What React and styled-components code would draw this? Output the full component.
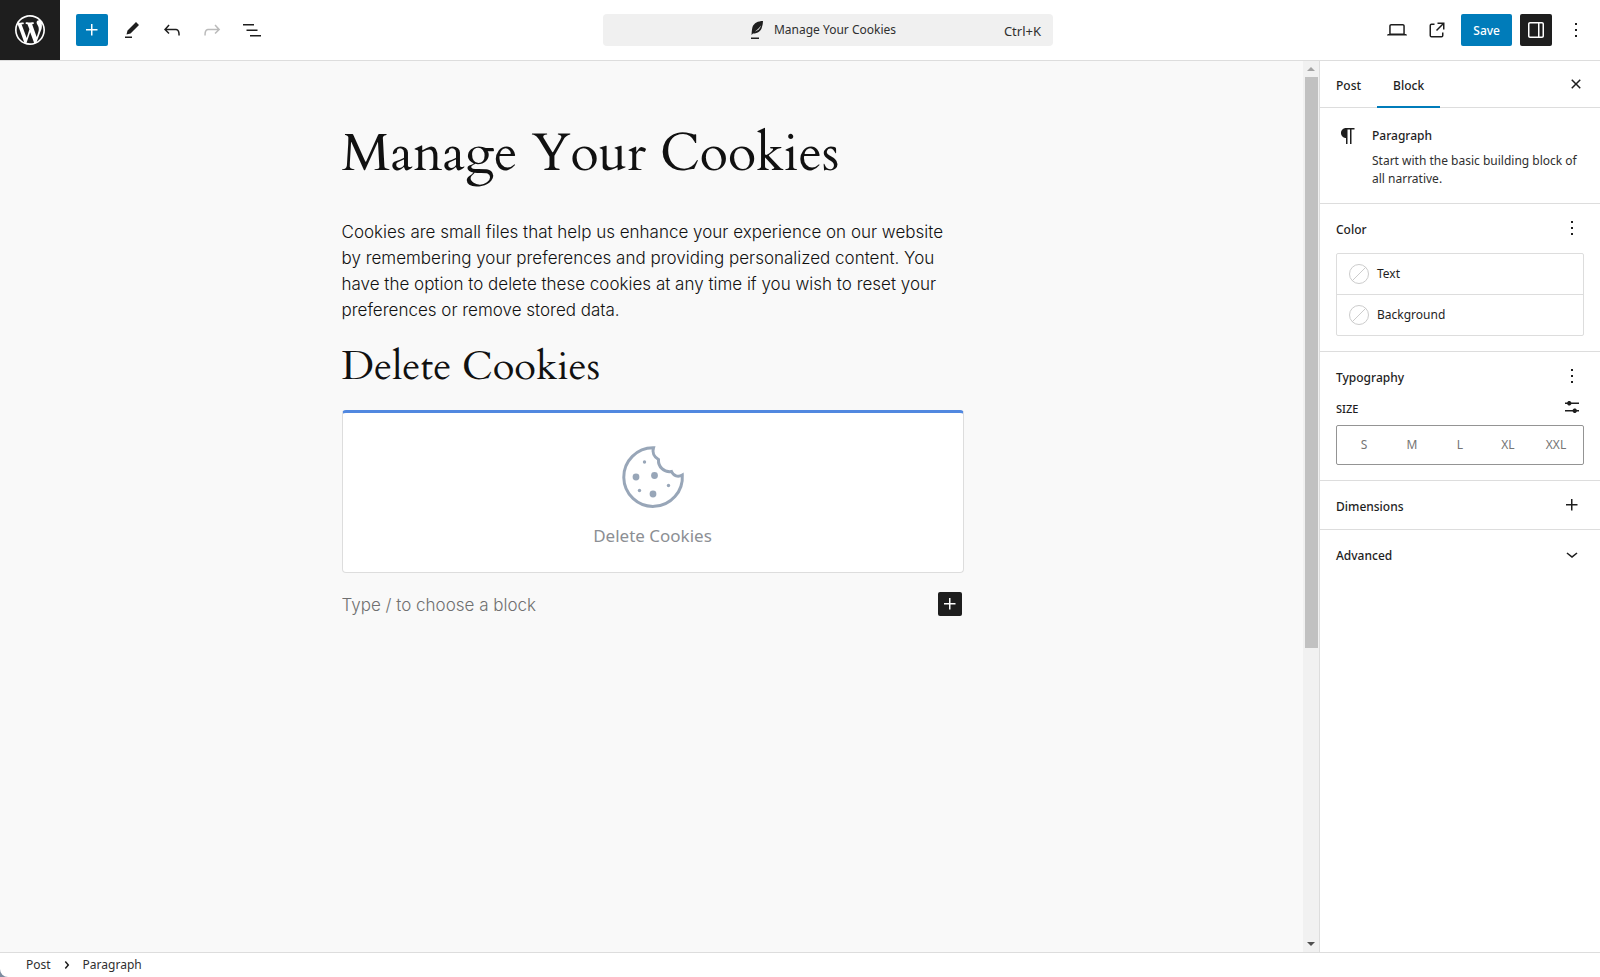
import React, { useState } from 'react'
import styled, { createGlobalStyle, css } from 'styled-components'

const icons = {
    plus: 'M11 12.5V17.5H12.5V12.5H17.5V11H12.5V6H11V11H6V12.5H11Z',
    edit: 'm19 7-3-3-8.5 8.5-1 4 4-1L19 7Zm-7 11.5H5V20h7v-1.5Z',
    undo: 'M18.3 11.7c-.6-.6-1.4-.9-2.3-.9H6.7l2.9-3.3-1.1-1-4.5 5L8.5 16l1-1-2.7-2.7H16c.5 0 .9.2 1.3.5 1 1 1 3.4 1 4.5v.3h1.5v-.2c0-1.5 0-4.3-1.5-5.7z',
    redo: 'M15.6 6.5l-1.1 1 2.9 3.3H8c-.9 0-1.7.3-2.3.9-1.4 1.5-1.4 4.2-1.4 5.6v.2h1.5v-.3c0-1.1 0-3.5 1-4.5.3-.3.7-.5 1.3-.5h9.2L14.5 15l1.1 1.1 4.6-4.6-4.6-5z',
    list: 'M3 6h11v1.5H3V6Zm3.5 5.5h11V13h-11v-1.5ZM21 17H10v1.5h11V17Z',
    laptop: 'M20.5 16h-.7V8c0-1.1-.9-2-2-2H6.2c-1.1 0-2 .9-2 2v8h-.7c-.8 0-1.5.7-1.5 1.5h20c0-.8-.7-1.5-1.5-1.5zM5.7 8c0-.3.2-.5.5-.5h11.6c.3 0 .5.2.5.5v7.6H5.7V8z',
    external: 'M19.5 4.5h-7V6h4.44l-5.97 5.97 1.06 1.06L18 7.06v4.44h1.5v-7Zm-13 1a2 2 0 0 0-2 2v10a2 2 0 0 0 2 2h10a2 2 0 0 0 2-2v-3H17v3a.5.5 0 0 1-.5.5h-10a.5.5 0 0 1-.5-.5v-10a.5.5 0 0 1 .5-.5h3V5.5h-3Z',
    drawer: 'M18 4H6c-1.1 0-2 .9-2 2v12c0 1.1.9 2 2 2h12c1.1 0 2-.9 2-2V6c0-1.1-.9-2-2-2zm-4 14.5H6c-.3 0-.5-.2-.5-.5V6c0-.3.2-.5.5-.5h8v13zm4.5-.5c0 .3-.2.5-.5.5h-2.5v-13H18c.3 0 .5.2.5.5v12z',
    more: 'M13 19h-2v-2h2v2zm0-6h-2v-2h2v2zm0-6h-2V5h2v2z',
    close: 'M12 13.06l3.712 3.713 1.061-1.06L13.061 12l3.712-3.712-1.06-1.06L12 10.938 8.288 7.227l-1.061 1.06L10.939 12l-3.712 3.712 1.06 1.061L12 13.061z',
    paragraph: 'm9.996 14v-.225l.004 0v6.225h1.5v-14.5h2.5v14.5h1.5v-14.5h3v-1.5h-8.504c-2.761 0-5 2.239-5 5 0 2.761 2.239 5 5 5z',
    sliders: 'm19 7.5h-7.628c-.309-.874-1.142-1.5-2.122-1.5-.98 0-1.813.626-2.122 1.5h-2.128v1.5h2.128c.309.874 1.142 1.5 2.122 1.5.98 0 1.813-.626 2.122-1.5h7.628zM19 15h-2.128c-.309-.874-1.142-1.5-2.122-1.5s-1.813.626-2.122 1.5h-7.628v1.5h7.628c.309.874 1.142 1.5 2.122 1.5s1.813-.626 2.122-1.5h2.128z',
    chevronDown: 'M17.5 11.6L12 16l-5.5-4.4.9-1.2L12 14l4.5-3.6 1 1.2z',
    chevronRight: 'M10.862 8.04L14.28 12.029L10.862 16.017L9.723 15.04L12.305 12.029L9.723 9.017L10.862 8.04Z',
    wordpress: 'M20 10c0-5.51-4.49-10-10-10C4.48 0 0 4.49 0 10c0 5.52 4.48 10 10 10 5.51 0 10-4.48 10-10zM7.78 15.37L4.37 6.22c.55-.02 1.17-.08 1.17-.08.5-.06.44-1.13-.06-1.11 0 0-1.45.11-2.37.11-.18 0-.37 0-.58-.01C4.12 2.69 6.87 1.11 10 1.11c2.33 0 4.45.87 6.05 2.34-.68-.11-1.65.39-1.65 1.58 0 .74.45 1.36.9 2.1.35.61.55 1.36.55 2.46 0 1.49-1.4 5-1.4 5l-3.03-8.37c.54-.02.82-.17.82-.17.5-.05.44-1.25-.06-1.22 0 0-1.44.12-2.38.12-.87 0-2.33-.12-2.33-.12-.5-.03-.56 1.2-.06 1.22l.92.08 1.26 3.41zM17.41 10c.24-.64.74-1.87.43-4.25.7 1.29 1.05 2.71 1.05 4.25 0 3.29-1.73 6.24-4.4 7.78.97-2.59 1.94-5.2 2.92-7.78zM6.1 18.09C3.12 16.65 1.11 13.53 1.11 10c0-1.3.23-2.48.72-3.59C3.25 10.3 4.67 14.2 6.1 18.09zm4.03-6.63l2.58 6.98c-.86.29-1.76.45-2.71.45-.79 0-1.57-.11-2.29-.33.81-2.38 1.62-4.74 2.42-7.1z',
}

function Icon({ name, size = 24, viewBox = '0 0 24 24' }) {
    return (
        <svg width={size} height={size} viewBox={viewBox} fill="currentColor" aria-hidden="true">
            <path fillRule="evenodd" d={icons[name]} />
        </svg>
    )
}

function FeatherIcon() {
    return (
        <svg width="14" height="20" viewBox="0 0 14 20" aria-hidden="true">
            <path d="M13 1C8 1 4 3 2.500 7C2 9 1.800 11 1.500 15L3 13.500C8 13.500 11 11 12 7C12.700 5 13 3 13 1Z" fill="#1e1e1e" />
            <path d="M5 11.500C7 11 10.500 9 10.800 5.500C9 8.500 7 10 5 11.500Z" fill="#f0f0f0" />
            <path d="M1 17.500H9V19H1Z" fill="#1e1e1e" />
        </svg>
    )
}

function CookieIcon() {
    return (
        <svg width="64" height="64" viewBox="0 0 64 64" fill="#98a6b8" aria-hidden="true">
            <path
                d="M32.500 2.800A29.300 29.300 0 1 0 61.300 30C57 32.500 52.500 31 50.500 26.500C43 27.500 37 22 37.500 14.500C33 12 31 7.500 32.500 2.800Z"
                fill="none"
                stroke="#98a6b8"
                strokeWidth="3"
            />
            <circle cx="23.500" cy="17" r="1.700" />
            <circle cx="15" cy="32" r="3.400" />
            <circle cx="33.500" cy="30.500" r="3.400" />
            <circle cx="47.500" cy="40.500" r="1.700" />
            <circle cx="18.500" cy="45.500" r="1.700" />
            <circle cx="32" cy="49" r="3.400" />
        </svg>
    )
}

function App() {
    const [tab, setTab] = useState('Block')

    return (
        <Editor>
            <GlobalStyle />
            <Header>
                <HomeLink href="#" aria-label="View posts">
                    <Icon name="wordpress" size={36} viewBox="-2 -2 24 24" />
                </HomeLink>
                <Tools>
                    <IconButton $tone="primary" aria-label="Add block"><Icon name="plus" /></IconButton>
                    <IconButton aria-label="Tools"><Icon name="edit" /></IconButton>
                    <IconButton aria-label="Undo"><Icon name="undo" /></IconButton>
                    <IconButton aria-label="Redo" disabled><Icon name="redo" /></IconButton>
                    <IconButton aria-label="Document overview"><Icon name="list" /></IconButton>
                </Tools>
                <CommandBar>
                    <CommandTitle>
                        <FeatherIcon />
                        Manage Your Cookies
                    </CommandTitle>
                    <Shortcut>Ctrl+K</Shortcut>
                </CommandBar>
                <Settings>
                    <IconButton aria-label="Preview"><Icon name="laptop" /></IconButton>
                    <IconButton aria-label="View post"><Icon name="external" /></IconButton>
                    <SaveButton>Save</SaveButton>
                    <IconButton $tone="dark" aria-label="Settings"><Icon name="drawer" /></IconButton>
                    <IconButton aria-label="Options"><Icon name="more" /></IconButton>
                </Settings>
            </Header>

            <Body>
                <Canvas>
                    <Content>
                        <Title>Manage Your Cookies</Title>
                        <Text>
                            Cookies are small files that help us enhance your experience on our website by
                            remembering your preferences and providing personalized content. You have the
                            option to delete these cookies at any time if you wish to reset your preferences
                            or remove stored data.
                        </Text>
                        <Heading>Delete Cookies</Heading>
                        <CookieCard>
                            <CookieIcon />
                            <CardLabel>Delete Cookies</CardLabel>
                        </CookieCard>
                        <Appender>
                            <BlockInput placeholder="Type / to choose a block" aria-label="Empty block" />
                            <InsertButton aria-label="Add block"><Icon name="plus" /></InsertButton>
                        </Appender>
                    </Content>
                </Canvas>

                <Scrollbar aria-hidden="true">
                    <Arrow $up />
                    <Track><Thumb /></Track>
                    <Arrow />
                </Scrollbar>

                <Sidebar>
                    <Tabs role="tablist">
                        {['Post', 'Block'].map((name) => (
                            <Tab key={name} role="tab" aria-selected={tab === name} $active={tab === name} onClick={() => setTab(name)}>
                                {name}
                            </Tab>
                        ))}
                        <CloseButton aria-label="Close settings"><Icon name="close" /></CloseButton>
                    </Tabs>

                    <BlockCard>
                        <Icon name="paragraph" />
                        <div>
                            <BlockName>Paragraph</BlockName>
                            <BlockInfo>Start with the basic building block of all narrative.</BlockInfo>
                        </div>
                    </BlockCard>

                    <Panel>
                        <PanelHeader>
                            <PanelTitle>Color</PanelTitle>
                            <SmallButton aria-label="Color options"><Icon name="more" /></SmallButton>
                        </PanelHeader>
                        <ColorList>
                            <ColorButton><Swatch />Text</ColorButton>
                            <ColorButton><Swatch />Background</ColorButton>
                        </ColorList>
                    </Panel>

                    <Panel>
                        <PanelHeader>
                            <PanelTitle>Typography</PanelTitle>
                            <SmallButton aria-label="Typography options"><Icon name="more" /></SmallButton>
                        </PanelHeader>
                        <SizeHeader>
                            <SizeLabel>Size</SizeLabel>
                            <SmallButton aria-label="Set custom size"><Icon name="sliders" /></SmallButton>
                        </SizeHeader>
                        <SizeGroup>
                            {['S', 'M', 'L', 'XL', 'XXL'].map((size) => (
                                <SizeButton key={size}>{size}</SizeButton>
                            ))}
                        </SizeGroup>
                    </Panel>

                    <ToggleRow>
                        <RowLabel>Dimensions</RowLabel>
                        <Icon name="plus" />
                    </ToggleRow>
                    <ToggleRow>
                        <RowLabel>Advanced</RowLabel>
                        <Icon name="chevronDown" />
                    </ToggleRow>
                </Sidebar>
            </Body>

            <Footer>
                <Crumb href="#">Post</Crumb>
                <Icon name="chevronRight" />
                <Crumb href="#">Paragraph</Crumb>
            </Footer>
        </Editor>
    )
}
export default App

const GlobalStyle = createGlobalStyle`
    *, *::before {
        box-sizing: border-box;
    }
    body {
        margin: 0;
        background: #7d8ca0;
        color: #1e1e1e;
        font-family: "Segoe UI", "Noto Sans", sans-serif;
        font-size: 12px;
        line-height: 18px;
    }
    button, input {
        margin: 0;
        padding: 0;
        border: 0;
        background: none;
        color: inherit;
        font: inherit;
    }
    button {
        cursor: pointer;
    }
    svg {
        display: block;
        flex-shrink: 0;
    }
`
const Editor = styled.div`
    display: flex;
    flex-direction: column;
    height: 100vh;
    overflow: hidden;
    border-bottom-left-radius: 8px;
    background: #fff;
`
const Header = styled.header`
    display: grid;
    grid-template-columns: 60px 1fr minmax(0, 450px) 1fr;
    align-items: center;
    height: 61px;
    padding-right: 4px;
    border-bottom: 1px solid #ddd;
`
const HomeLink = styled.a`
    display: flex;
    align-items: center;
    justify-content: center;
    height: 60px;
    background: #1e1e1e;
    color: #fff;
`
const Tools = styled.div`
    display: flex;
    gap: 8px;
    padding-left: 16px;
`
const tones = {
    primary: css`
        background: #007cba;
        color: #fff;
    `,
    dark: css`
        background: #1e1e1e;
        color: #fff;
    `,
}
const IconButton = styled.button`
    display: flex;
    align-items: center;
    justify-content: center;
    width: 32px;
    height: 32px;
    border-radius: 2px;
    ${(props) => tones[props.$tone]}

    &:disabled {
        color: #bbb;
        cursor: default;
    }
`
const CommandBar = styled.button`
    display: grid;
    grid-template-columns: 1fr auto 1fr;
    align-items: center;
    height: 32px;
    padding: 0 12px;
    border-radius: 4px;
    background: #f0f0f0;
    color: #2f2f2f;
`
const CommandTitle = styled.span`
    display: flex;
    align-items: center;
    grid-column: 2;
    gap: 10px;
    padding-right: 10px;
`
const Shortcut = styled.span`
    justify-self: end;
    padding-top: 2px;
    font-size: 13px;
`
const Settings = styled.div`
    display: flex;
    justify-content: flex-end;
    gap: 8px;
    padding-right: 4px;
`
const SaveButton = styled.button`
    height: 32px;
    padding: 2px 12px 0;
    border-radius: 2px;
    background: #007cba;
    color: #fff;
    font-weight: 500;
`
const Body = styled.div`
    display: flex;
    flex: 1;
    min-height: 0;
`
const Canvas = styled.main`
    flex: 1;
    min-width: 0;
    padding-left: 2px;
    overflow: hidden;
    background: #f9f9f9;
    color: #111;
`
const Content = styled.div`
    max-width: 622px;
    margin: 0 auto;
    padding-top: 60px;
`
const Title = styled.h1`
    margin: 0;
    font-family: Cardo, "Liberation Serif", serif;
    font-size: 52px;
    font-weight: 400;
    line-height: 66px;
`
const Text = styled.p`
    margin: 32px 0 0;
    font-family: Inter, sans-serif;
    font-size: 17px;
    font-weight: 300;
    line-height: 26px;
`
const Heading = styled.h2`
    margin: 20px 0;
    font-family: Cardo, "Liberation Serif", serif;
    font-size: 40px;
    font-weight: 400;
    line-height: 47px;
`
const CookieCard = styled.section`
    display: flex;
    flex-direction: column;
    align-items: center;
    padding: 32px 0 23px;
    border: 1px solid #ddd;
    border-top: 3px solid #5188e0;
    border-radius: 4px;
    background: #fff;
`
const CardLabel = styled.p`
    margin: 14px 0 0;
    color: #8c8f94;
    font-size: 17px;
    line-height: 26px;
`
const Appender = styled.div`
    display: flex;
    align-items: center;
    margin-top: 18px;
    padding-right: 2px;
`
const BlockInput = styled.input`
    flex: 1;
    height: 26px;
    padding-top: 2px;
    outline: none;
    font-family: Inter, sans-serif;
    font-size: 17px;
    font-weight: 300;

    &::placeholder {
        color: #707070;
        opacity: 1;
    }
`
const InsertButton = styled(IconButton)`
    width: 24px;
    height: 24px;
    background: #1e1e1e;
    color: #fff;
`
const Scrollbar = styled.div`
    display: flex;
    flex-direction: column;
    width: 16px;
    background: #f1f1f1;
`
const Arrow = styled.div`
    height: 16px;
    padding: 6px 4px;

    &::before {
        content: "";
        display: block;
        width: 8px;
        border: 4px solid transparent;
        border-top: ${(props) => (props.$up ? '0' : '4px solid #505050')};
        border-bottom: ${(props) => (props.$up ? '4px solid #a3a3a3' : '0')};
    }
`
const Track = styled.div`
    flex: 1;
    padding: 0 1px 0 2px;
`
const Thumb = styled.div`
    height: 66.5%;
    background: #c1c1c1;
`
const Sidebar = styled.aside`
    width: 281px;
    border-left: 1px solid #ddd;
`
const Tabs = styled.div`
    display: flex;
    align-items: center;
    height: 47px;
    padding-right: 12px;
    border-bottom: 1px solid #ddd;
`
const Tab = styled.button`
    height: 47px;
    padding: 5px 16px 0;
    border-bottom: 2px solid ${(props) => (props.$active ? '#007cba' : 'transparent')};
    font-weight: 500;
`
const CloseButton = styled(IconButton)`
    width: 24px;
    height: 24px;
    margin-left: auto;
`
const BlockCard = styled.div`
    display: flex;
    gap: 12px;
    padding: 16px 16px 15px;
`
const BlockName = styled.h2`
    margin: 0 0 4px;
    font-size: 12px;
    font-weight: 500;
    line-height: 24px;
`
const BlockInfo = styled.p`
    margin: 0;
    color: #2f2f2f;
`
const Panel = styled.section`
    padding: 12px 16px 15px;
    border-top: 1px solid #ddd;
`
const PanelHeader = styled.div`
    display: flex;
    align-items: center;
    justify-content: space-between;
    height: 24px;
`
const PanelTitle = styled.h2`
    margin: 0;
    padding-top: 3px;
    font-size: 12px;
    font-weight: 500;
`
const SmallButton = styled(IconButton)`
    width: 24px;
    height: 24px;
`
const ColorList = styled.div`
    margin-top: 13px;
    border: 1px solid #ddd;
    border-radius: 2px;
`
const ColorButton = styled.button`
    display: flex;
    align-items: center;
    gap: 8px;
    width: 100%;
    height: 40px;
    padding: 0 12px;

    & + & {
        height: 41px;
        border-top: 1px solid #ddd;
    }
`
const Swatch = styled.span`
    width: 20px;
    height: 20px;
    border: 1px solid #ccc;
    border-radius: 50%;
    background: linear-gradient(-45deg, transparent 48%, #ccc 48%, #ccc 52%, transparent 52%);
`
const SizeHeader = styled.div`
    display: flex;
    align-items: center;
    justify-content: space-between;
    margin-top: 7px;
`
const SizeLabel = styled.span`
    padding-top: 3px;
    font-size: 11px;
    font-weight: 500;
    text-transform: uppercase;
`
const SizeGroup = styled.div`
    display: grid;
    grid-template-columns: repeat(5, 1fr);
    height: 40px;
    margin-top: 6px;
    padding: 0 3px;
    border: 1px solid #949494;
    border-radius: 2px;
`
const SizeButton = styled.button`
    color: #757575;
`
const ToggleRow = styled.button`
    display: flex;
    align-items: center;
    justify-content: space-between;
    width: 100%;
    height: 49px;
    padding: 0 16px;
    border-top: 1px solid #ddd;
`
const RowLabel = styled.span`
    padding-top: 3px;
    font-weight: 500;
`
const Footer = styled.footer`
    display: flex;
    align-items: center;
    gap: 4px;
    height: 25px;
    padding-left: 26px;
    border-top: 1px solid #ddd;
`
const Crumb = styled.a`
    color: #2f2f2f;
    text-decoration: none;
`
